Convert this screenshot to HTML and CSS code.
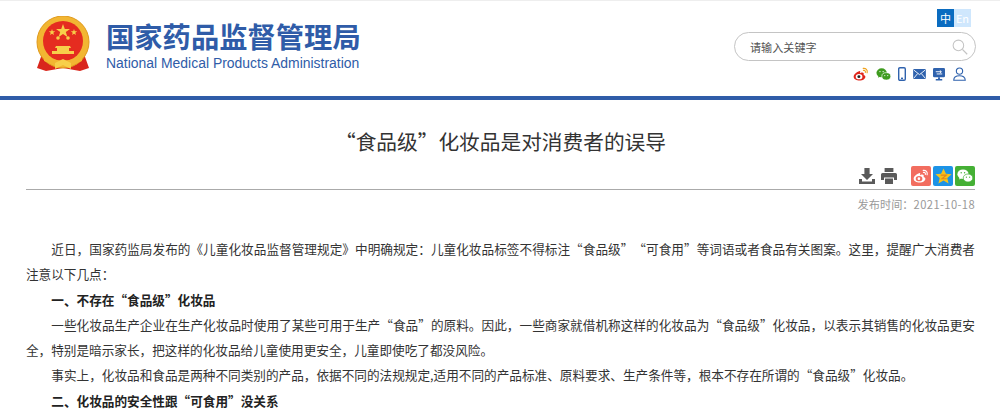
FILE: index.html
```html
<!DOCTYPE html>
<html lang="zh-CN">
<head>
    <meta charset="UTF-8">
    <title>“食品级”化妆品是对消费者的误导</title>
    <link rel="stylesheet" href="styles.css">
</head>
<body>
    <header class="site-header">
        <div class="brand">
            <svg class="emblem" viewBox="0 0 54 56" width="54" height="56">
                <path d="M6 38 L1 52 L10 55 L27 52 L44 55 L53 52 L48 38 Z" fill="#d9261c"/>
                <circle cx="27" cy="26" r="26" fill="#f2b632"/>
                <circle cx="27" cy="26" r="26" fill="none" stroke="#e09a1c" stroke-width="1"/>
                <circle cx="27" cy="25" r="20" fill="#e52c20"/>
                <polygon points="27,8 28.8,13 34,13 29.8,16 31.4,21 27,18 22.6,21 24.2,16 20,13 25.2,13" fill="#f7cf4a"/>
                <polygon points="16,13 16.8,15.3 19.2,15.3 17.3,16.8 18,19 16,17.7 14,19 14.7,16.8 12.8,15.3 15.2,15.3" fill="#f7cf4a"/>
                <polygon points="38,13 38.8,15.3 41.2,15.3 39.3,16.8 40,19 38,17.7 36,19 36.7,16.8 34.8,15.3 37.2,15.3" fill="#f7cf4a"/>
                <circle cx="22" cy="22" r="1.8" fill="#f7cf4a"/>
                <circle cx="32" cy="22" r="1.8" fill="#f7cf4a"/>
                <path d="M19 32 L20 30 H34 L35 32 H33 V35 H38 V38 H16 V35 H21 V32 Z" fill="#f7cf4a"/>
                <path d="M8 39 Q27 50 46 39 L46 45 Q27 54 8 45 Z" fill="#f2b632"/>
                <path d="M19 47 L27 43 L35 47 L35 53 L27 49 L19 53 Z" fill="#f7cf4a"/>
            </svg>
            <div class="brand-text">
                <div class="brand-cn">国家药品监督管理局</div>
                <div class="brand-en">National Medical Products Administration</div>
            </div>
        </div>
        <div class="tools">
            <div class="lang">
                <span class="lang-cn">中</span><span class="lang-en">En</span>
            </div>
            <div class="search">
                <span>请输入关键字</span>
                <svg viewBox="0 0 20 20" width="16" height="16"><circle cx="8" cy="8" r="6.6" fill="none" stroke="#c4c4c4" stroke-width="1.3"/><path d="M13 13 L19 19" stroke="#c4c4c4" stroke-width="1.6"/></svg>
            </div>
            <div class="social">
                <svg viewBox="0 0 18 16" width="16" height="14"><path d="M7.5 4.5 C3.5 5.5 0.6 8.6 0.6 11 C0.6 13.8 4 15.4 7.4 15.4 C11.2 15.4 14 13.2 14 11 C14 9.5 12.6 9.2 12 9 C12.6 7.4 12 6 9.6 6.4 L7.8 7 C8.2 5.4 8.4 4.4 7.5 4.5 Z" fill="#e0261c"/><ellipse cx="6.8" cy="11" rx="3.8" ry="3" fill="#fff"/><circle cx="6.6" cy="11" r="1.7" fill="#222"/><path d="M11.5 1.6 C14.6 1.2 16.8 3.6 16 6.6 M11.8 3.8 C13.4 3.6 14.4 4.8 14 6.2" fill="none" stroke="#f0a21e" stroke-width="1.3" stroke-linecap="round"/></svg>
                <svg viewBox="0 0 16 14" width="15" height="13"><ellipse cx="6" cy="5.2" rx="5.6" ry="4.8" fill="#3f9c1f"/><path d="M2.6 8 L2.2 10.6 L5 9 Z" fill="#3f9c1f"/><ellipse cx="11" cy="9" rx="4.8" ry="4" fill="#3f9c1f" stroke="#fff" stroke-width=".7"/><circle cx="4.2" cy="3.8" r=".7" fill="#fff"/><circle cx="7.6" cy="3.8" r=".7" fill="#fff"/><circle cx="9.4" cy="8.2" r=".6" fill="#fff"/><circle cx="12.6" cy="8.2" r=".6" fill="#fff"/></svg>
                <svg viewBox="0 0 8 14" width="8" height="14"><rect x=".7" y=".7" width="6.6" height="12.6" rx="1.2" fill="none" stroke="#2f62ad" stroke-width="1.4"/><rect x="3" y="10.6" width="2" height="1.4" fill="#2f62ad"/></svg>
                <svg viewBox="0 0 14 11" width="13" height="10"><rect width="14" height="11" rx="1.2" fill="#2f62ad"/><path d="M.8 1.2 L7 6.2 L13.2 1.2 M.8 10 L5 5 M13.2 10 L9 5" fill="none" stroke="#fff" stroke-width="1"/></svg>
                <svg viewBox="0 0 13 14" width="12" height="13"><rect width="13" height="10" rx="1.4" fill="#2f62ad"/><path d="M5.5 10 H7.5 V12 H10 V13.4 H3 V12 H5.5 Z" fill="#2f62ad"/><path d="M3 4 H9 M7.4 2.6 L9 4 L7.4 5.4 M10 6.4 H4" fill="none" stroke="#fff" stroke-width="1"/></svg>
                <svg class="user-icon" viewBox="0 0 14 15" width="13" height="14"><circle cx="7" cy="4.4" r="3.4" fill="none" stroke="#2f62ad" stroke-width="1.2"/><path d="M.8 14.3 C.8 10.8 3.6 9.4 7 9.4 C10.4 9.4 13.2 10.8 13.2 14.3 Z" fill="none" stroke="#2f62ad" stroke-width="1.2"/></svg>
            </div>
        </div>
    </header>

    <main class="article">
        <h1>“食品级”化妆品是对消费者的误导</h1>

        <div class="share-bar">
            <svg viewBox="0 0 16 16" width="16" height="16"><path d="M5.4 0 H10.6 V6 H14 L8 12 L2 6 H5.4 Z M0 11 H3 V13.6 H13 V11 H16 V16 H0 Z" fill="#5a5a5a"/></svg>
            <svg class="printer" viewBox="0 0 16 16" width="16" height="16"><path d="M3.6 0 H12.4 V4 H3.6 Z M1.5 5 H14.5 Q16 5 16 6.5 V12 H13 V9.5 H3 V12 H0 V6.5 Q0 5 1.5 5 Z M4 10.5 H12 V16 H4 Z" fill="#5a5a5a"/></svg>
            <span class="share-btn weibo">
                <svg viewBox="0 0 18 16" width="16" height="14"><path d="M7.5 4.5 C3.5 5.5 .6 8.6 .6 11 C.6 13.8 4 15.4 7.4 15.4 C11.2 15.4 14 13.2 14 11 C14 9.5 12.6 9.2 12 9 C12.6 7.4 12 6 9.6 6.4 L7.8 7 C8.2 5.4 8.4 4.4 7.5 4.5 Z" fill="#fff"/><ellipse cx="6.8" cy="11" rx="3.8" ry="3" fill="#f26d5f"/><circle cx="6.6" cy="11" r="1.5" fill="#fff"/><path d="M11.5 1.6 C14.6 1.2 16.8 3.6 16 6.6 M11.8 3.8 C13.4 3.6 14.4 4.8 14 6.2" fill="none" stroke="#fff" stroke-width="1.3" stroke-linecap="round"/></svg>
            </span>
            <span class="share-btn qzone">
                <svg viewBox="0 0 18 17" width="17" height="16"><polygon points="9,.5 11.6,6 17.6,6.6 13,10.6 14.4,16.5 9,13.4 3.6,16.5 5,10.6 .4,6.6 6.4,6" fill="#f6c21c"/><path d="M6 7.6 H12 L7.4 11.4 H12.4" fill="none" stroke="#e8851a" stroke-width="1.2"/></svg>
            </span>
            <span class="share-btn wechat">
                <svg viewBox="0 0 16 14" width="16" height="14"><ellipse cx="6" cy="5.2" rx="5.6" ry="4.8" fill="#fff"/><path d="M2.6 8 L2.2 10.6 L5 9 Z" fill="#fff"/><ellipse cx="11" cy="9" rx="4.8" ry="4" fill="#fff" stroke="#45b035" stroke-width=".7"/><circle cx="4.2" cy="3.8" r=".7" fill="#45b035"/><circle cx="7.6" cy="3.8" r=".7" fill="#45b035"/><circle cx="9.4" cy="8.2" r=".6" fill="#45b035"/><circle cx="12.6" cy="8.2" r=".6" fill="#45b035"/></svg>
            </span>
        </div>
        <div class="pub-date">发布时间：<span class="pub-num">2021-10-18</span></div>

        <div class="content">
            <p>近日，国家药监局发布的《儿童化妆品监督管理规定》中明确规定：儿童化妆品标签不得标注“食品级”“可食用”等词语或者食品有关图案。这里，提醒广大消费者注意以下几点：</p>
            <p><strong>一、不存在“食品级”化妆品</strong></p>
            <p>一些化妆品生产企业在生产化妆品时使用了某些可用于生产“食品”的原料。因此，一些商家就借机称这样的化妆品为“食品级”化妆品，以表示其销售的化妆品更安全，特别是暗示家长，把这样的化妆品给儿童使用更安全，儿童即使吃了都没风险。</p>
            <p>事实上，化妆品和食品是两种不同类别的产品，依据不同的法规规定,适用不同的产品标准、原料要求、生产条件等，根本不存在所谓的“食品级”化妆品。</p>
            <p><strong>二、化妆品的安全性跟“可食用”没关系</strong></p>
        </div>
    </main>
</body>
</html>
```

FILE: styles.css
```css
* {
    box-sizing: border-box;
}
html, body {
    height: 419px;
    overflow: hidden;
}
body {
    margin: 0;
    background: #fff;
    color: #333;
    font-family: "Noto Sans CJK SC", "Liberation Sans", sans-serif;
    text-spacing-trim: space-all;
}
.site-header {
    display: flex;
    justify-content: space-between;
    height: 100px;
    padding: 8px 24px 0 36px;
    border-top: 1px solid #eee;
    border-bottom: 4px solid #2f5ca8;
}
.brand {
    display: flex;
    align-items: flex-start;
    padding-top: 7px;
}
.emblem {
    margin-right: 16px;
}
.brand-cn {
    margin-top: 3px;
    color: #2f5ca8;
    font-size: 28.3px;
    font-weight: 700;
    line-height: 34px;
    white-space: nowrap;
}
.brand-en {
    margin-top: 2px;
    color: #2f5ca8;
    font-family: "Liberation Sans", sans-serif;
    font-size: 13.95px;
    line-height: 17px;
    white-space: nowrap;
}
.tools {
    display: flex;
    flex-direction: column;
    align-items: flex-end;
    width: 242px;
}
.lang {
    display: flex;
    margin-right: 5px;
    font-size: 11px;
    line-height: 18px;
    text-align: center;
}
.lang-cn {
    width: 17px;
    background: #0a6cc0;
    color: #fff;
}
.lang-en {
    width: 17px;
    background: #cfe7fd;
    color: #fff;
}
.search {
    display: flex;
    justify-content: space-between;
    align-items: center;
    width: 242px;
    height: 29px;
    margin-top: 5px;
    padding: 0 7px 0 15px;
    border: 1px solid #c4c4c4;
    border-radius: 15px;
    color: #555;
    font-size: 11.1px;
}
.social {
    display: flex;
    align-items: center;
    gap: 7px;
    height: 16px;
    margin-top: 5px;
    padding-right: 10px;
}
.user-icon {
    margin-left: 1px;
}
.article {
    padding: 0 25px 0 26px;
}
.article h1 {
    margin: 26px 0 0;
    color: #333;
    font-size: 20.7px;
    font-weight: 400;
    line-height: 30px;
    text-align: center;
}
.share-bar {
    display: flex;
    justify-content: flex-end;
    align-items: center;
    gap: 2px;
    height: 24px;
    margin-top: 10px;
    padding-bottom: 3px;
    border-bottom: 1px solid #aaa;
}
.printer {
    margin: 0 12px 0 4px;
}
.share-btn {
    display: flex;
    justify-content: center;
    align-items: center;
    width: 20px;
    height: 20px;
    border-radius: 2px;
}
.weibo {
    background: #f26d5f;
}
.qzone {
    background: #1d93e6;
}
.wechat {
    background: #45b035;
}
.pub-date {
    margin-top: 6px;
    color: #999;
    font-size: 11.2px;
    line-height: 16px;
    text-align: right;
}
.pub-num {
    letter-spacing: 0.4px;
}
.content {
    margin-top: 24px;
    color: #333;
    font-size: 12.64px;
    line-height: 25.3px;
}
.content p {
    margin: 0;
    text-indent: 2em;
    text-align: justify;
}
.content strong {
    color: #222;
}
```
